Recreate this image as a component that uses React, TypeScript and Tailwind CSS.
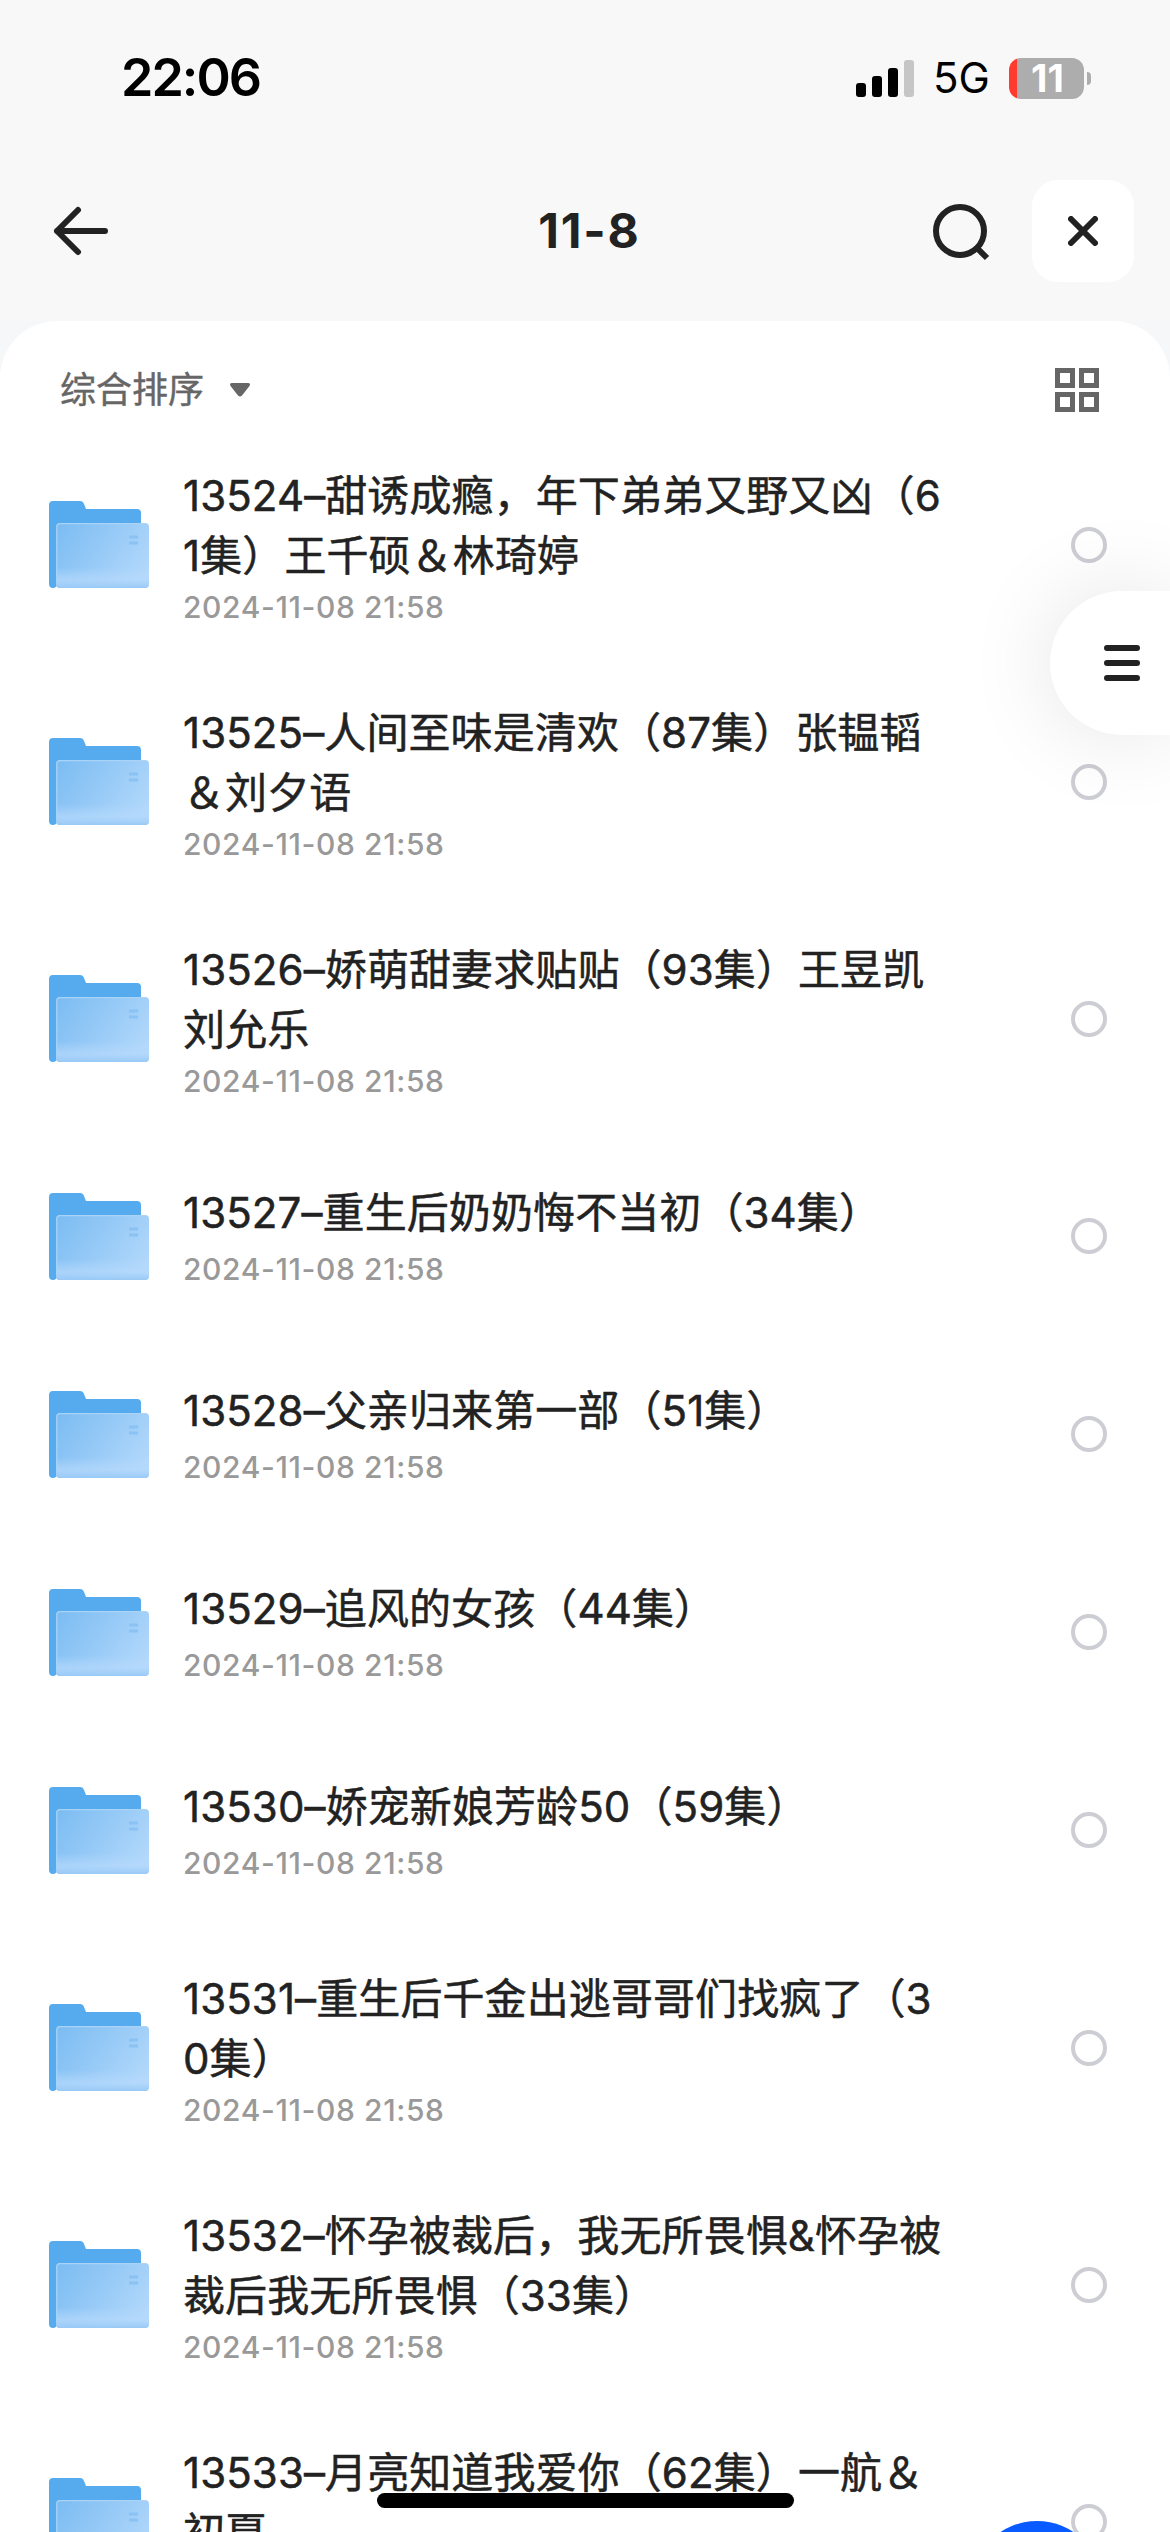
import React from 'react';

type FileItem = { id: number; lines: string[]; time: string };

const files: FileItem[] = [
  { id: 13524, lines: ['13524–甜诱成瘾，年下弟弟又野又凶（6', '1集）王千硕＆林琦婷'], time: '2024-11-08 21:58' },
  { id: 13525, lines: ['13525–人间至味是清欢（87集）张韫韬', '＆刘夕语'], time: '2024-11-08 21:58' },
  { id: 13526, lines: ['13526–娇萌甜妻求贴贴（93集）王昱凯', '刘允乐'], time: '2024-11-08 21:58' },
  { id: 13527, lines: ['13527–重生后奶奶悔不当初（34集）'], time: '2024-11-08 21:58' },
  { id: 13528, lines: ['13528–父亲归来第一部（51集）'], time: '2024-11-08 21:58' },
  { id: 13529, lines: ['13529–追风的女孩（44集）'], time: '2024-11-08 21:58' },
  { id: 13530, lines: ['13530–娇宠新娘芳龄50（59集）'], time: '2024-11-08 21:58' },
  { id: 13531, lines: ['13531–重生后千金出逃哥哥们找疯了（3', '0集）'], time: '2024-11-08 21:58' },
  { id: 13532, lines: ['13532–怀孕被裁后，我无所畏惧&怀孕被', '裁后我无所畏惧（33集）'], time: '2024-11-08 21:58' },
  { id: 13533, lines: ['13533–月亮知道我爱你（62集）一航＆', '初夏'], time: '2024-11-08 21:58' },
];

const FolderIcon: React.FC = () => (
  <svg className="w-[100px] h-[87px] shrink-0" viewBox="0 0 100 87" fill="none">
    <defs>
      <linearGradient id="folder-front" x1="8" y1="22" x2="92" y2="80" gradientUnits="userSpaceOnUse">
        <stop stopColor="#7bbcf2" />
        <stop offset="0.45" stopColor="#93c8f6" />
        <stop offset="1" stopColor="#b2d8fb" />
      </linearGradient>
      <linearGradient id="folder-shade" x1="0" y1="66" x2="0" y2="87" gradientUnits="userSpaceOnUse">
        <stop stopColor="#b5d9fc" stopOpacity="0" />
        <stop offset="0.6" stopColor="#b5d9fc" stopOpacity="0.7" />
        <stop offset="1" stopColor="#98c9f6" />
      </linearGradient>
    </defs>
    <path d="M4 0H31Q34 0 35 3L37 8H88Q92 8 92 12V40H8V84Q7 87 4 87Q0 87 0 83V4Q0 0 4 0Z" fill="#55abee" />
    <rect x="7" y="22" width="93" height="65" rx="4" fill="url(#folder-front)" />
    <rect x="7" y="22" width="93" height="65" rx="4" fill="url(#folder-shade)" />
    <path d="M7.8 82V26Q7.8 22.6 11 22.6H96" stroke="#a9d4f8" strokeWidth="1.2" />
    <path d="M80 36H89M80 42H89" stroke="#8ac2f4" strokeWidth="3" />
  </svg>
);

const StatusBar: React.FC = () => (
  <div className="h-[141px] pt-[48px] pl-[121px] pr-[79px] flex items-start justify-between text-black">
    <span className="text-[52px] leading-[60px] font-semibold tracking-[-2px]">22:06</span>
    <div className="h-[60px] flex items-center">
      <svg className="w-[58px] h-[37px]" viewBox="0 0 58 37">
        <rect x="0" y="23" width="10" height="14" rx="3" />
        <rect x="16" y="16" width="10" height="21" rx="3" />
        <rect x="32" y="8" width="10" height="29" rx="3" />
        <rect x="48" y="0" width="10" height="37" rx="3" fill="#c6c6c6" />
      </svg>
      <span className="ml-[19px] w-[56px] text-[42px] leading-[60px]">5G</span>
      <div className="ml-[20px] w-[75px] h-[41px] pl-[2px] rounded-[12px] bg-[linear-gradient(90deg,#ff3b30_8px,#adadad_8px)] text-center text-[38px] leading-[41px] font-bold text-white">
        11
      </div>
      <div className="ml-[3px] w-[4px] h-[13px] rounded-r-full bg-[#adadad]" />
    </div>
  </div>
);

const NavBar: React.FC = () => (
  <div className="h-[180px] pl-[53px] pr-[36px] flex items-center">
    <div className="flex-1">
      <svg className="w-[58px] h-[52px]" viewBox="0 0 58 52" fill="none" stroke="#222" strokeWidth="6" strokeLinecap="round" strokeLinejoin="round">
        <path d="M25 5L4 26L25 47M4 26H52" />
      </svg>
    </div>
    <h1 className="mr-[8px] text-[48px] font-bold tracking-[1.8px] text-[#222]">11-8</h1>
    <div className="flex-1 flex items-center justify-end">
      <svg className="w-[60px] h-[60px] mr-[42px]" viewBox="0 0 60 60" fill="none" stroke="#222" strokeWidth="6">
        <circle cx="30" cy="30" r="24" />
        <path d="M46 46L57 57" />
      </svg>
      <button className="w-[102px] h-[102px] rounded-[26px] bg-white flex items-center justify-center">
        <svg className="w-[30px] h-[30px]" viewBox="0 0 30 30" fill="none" stroke="#222" strokeWidth="6" strokeLinecap="round">
          <path d="M3 3L27 27M27 3L3 27" />
        </svg>
      </button>
    </div>
  </div>
);

const SortBar: React.FC = () => (
  <div className="h-[105px] pt-[32px] pl-[60px] pr-[71px] flex items-center justify-between text-[#666]">
    <div className="flex items-center">
      <span className="text-[36px] leading-[54px] [-webkit-text-stroke:0.4px_#666]">综合排序</span>
      <svg className="ml-[25px] w-[22px] h-[16px]" viewBox="0 0 22 16" fill="#666">
        <path d="M3 1H19Q22 1 20.500 4L13 13.500Q11 15.500 9 13.500L1.500 4Q0 1 3 1Z" />
      </svg>
    </div>
    <svg className="w-[44px] h-[44px]" viewBox="0 0 44 44" fill="none" stroke="#666" strokeWidth="5">
      <rect x="2.500" y="2.500" width="15" height="15" />
      <rect x="26.500" y="2.500" width="15" height="15" />
      <rect x="2.500" y="26.500" width="15" height="15" />
      <rect x="26.500" y="26.500" width="15" height="15" />
    </svg>
  </div>
);

const FileRow: React.FC<{ file: FileItem }> = ({ file }) => {
  const single = file.lines.length === 1;
  return (
    <li className={`${single ? 'h-[198px]' : 'h-[237px]'} pl-[49px] pr-[63px] flex items-center`}>
      <FolderIcon />
      <div className={`ml-[34px] flex-1 ${single ? 'pt-[2px]' : 'pt-[6px]'}`}>
        <div className="text-[42px] leading-[60px] tracking-[0.1px] text-[#222] [-webkit-text-stroke:0.5px_#222] whitespace-nowrap">
          {file.lines.map(line => (
            <p key={line}>{line}</p>
          ))}
        </div>
        <p className={`text-[30px] leading-[42px] pb-[2px] font-medium tracking-[0.6px] text-[#999] ${single ? 'mt-[5px]' : ''}`}>
          {file.time}
        </p>
      </div>
      <span className="w-[36px] h-[36px] shrink-0 rounded-full border-4 border-[#cdcdd4]" />
    </li>
  );
};

const App: React.FC = () => {
  return (
    <div className="relative w-[1170px] h-[2532px] overflow-hidden bg-[#f8f8f8] font-['Inter','Noto_Sans_CJK_SC',sans-serif]">
      <StatusBar />
      <NavBar />
      <div className="bg-[#f5f7f9]">
        <main className="rounded-t-[57px] bg-white">
          <SortBar />
          <ul>
            {files.map(f => (
              <FileRow key={f.id} file={f} />
            ))}
          </ul>
        </main>
      </div>

      {/* drawer handle on the right edge */}
      <button className="absolute right-0 top-[591px] w-[120px] h-[144px] pl-[54px] rounded-l-full bg-white flex flex-col justify-center gap-[9px] shadow-[0_0_90px_rgba(0,0,0,0.11)]">
        <span className="w-[36px] h-[6px] rounded-full bg-[#222]" />
        <span className="w-[36px] h-[6px] rounded-full bg-[#222]" />
        <span className="w-[36px] h-[6px] rounded-full bg-[#222]" />
      </button>

      <div className="absolute left-[971px] top-[2521px] w-[132px] h-[132px] rounded-full bg-[#0a5bff]" />
      <div className="absolute left-[377px] top-[2493px] w-[417px] h-[15px] rounded-full bg-black" />
    </div>
  );
};

export default App;
